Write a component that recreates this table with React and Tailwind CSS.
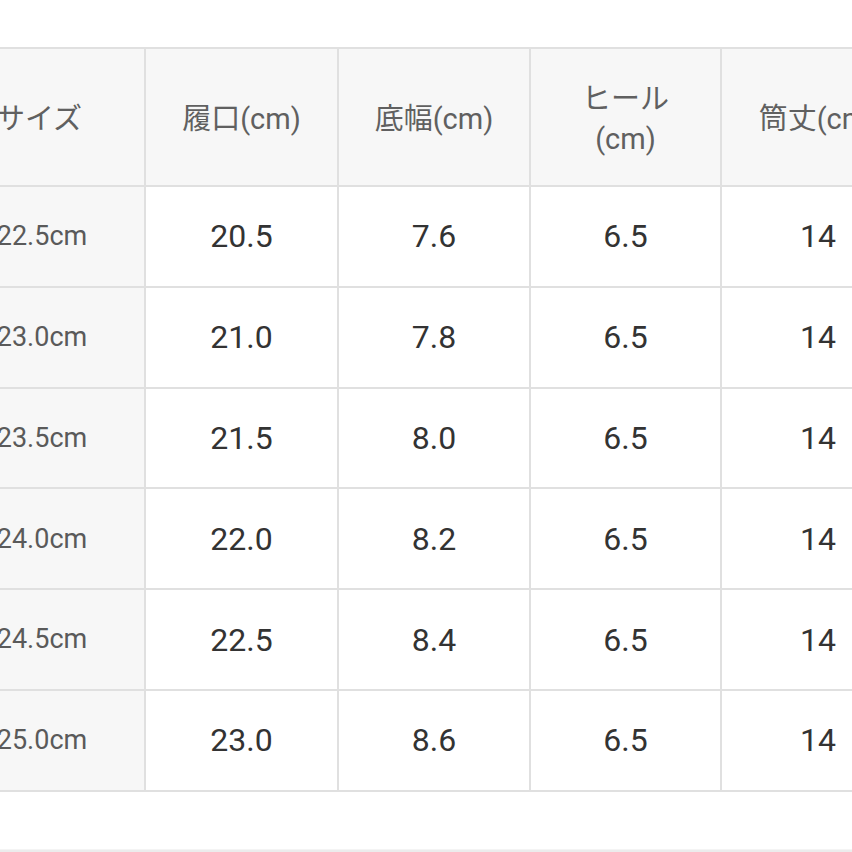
const headers = ["サイズ", "履口(cm)", "底幅(cm)", "ヒール\n(cm)", "筒丈(cm)"];

const rows = [
  ["22.5cm", "20.5", "7.6", "6.5", "14"],
  ["23.0cm", "21.0", "7.8", "6.5", "14"],
  ["23.5cm", "21.5", "8.0", "6.5", "14"],
  ["24.0cm", "22.0", "8.2", "6.5", "14"],
  ["24.5cm", "22.5", "8.4", "6.5", "14"],
  ["25.0cm", "23.0", "8.6", "6.5", "14"],
];

const font = { fontFamily: 'Roboto, "Noto Sans CJK JP", sans-serif' };

const App = () => {
  return (
    <div
      className="relative h-[852px] w-[852px] overflow-hidden bg-white"
      style={font}
    >
      <div className="pt-[47px]">
        <div className="ml-[-68px] grid w-max grid-cols-[210px_191px_190px_189px_192px] grid-rows-[136px_repeat(6,98.8px)] gap-[2px] bg-[#e0e0e0] p-[2px]">
          {headers.map((h) => (
            <div
              key={h}
              className="flex items-center justify-center whitespace-pre-line bg-[#f7f7f7] pt-[3px] text-center text-[29px] leading-[40px] text-[#606060]"
            >
              {h}
            </div>
          ))}
          {rows.map((row) =>
            row.map((cell, i) =>
              i === 0 ? (
                <div
                  key={row[0] + i}
                  className="flex items-center justify-center bg-[#f7f7f7] pl-[6px] text-[27px] text-[#5a5a5a]"
                >
                  {cell}
                </div>
              ) : (
                <div
                  key={row[0] + i}
                  className="flex items-center justify-center bg-white text-[32px] text-[#333333]"
                >
                  {cell}
                </div>
              )
            )
          )}
        </div>
      </div>
      <div className="absolute bottom-0 left-0 h-[3px] w-full border-t border-[#f4f4f4] bg-[#ececec]" />
    </div>
  );
};

export default App;
